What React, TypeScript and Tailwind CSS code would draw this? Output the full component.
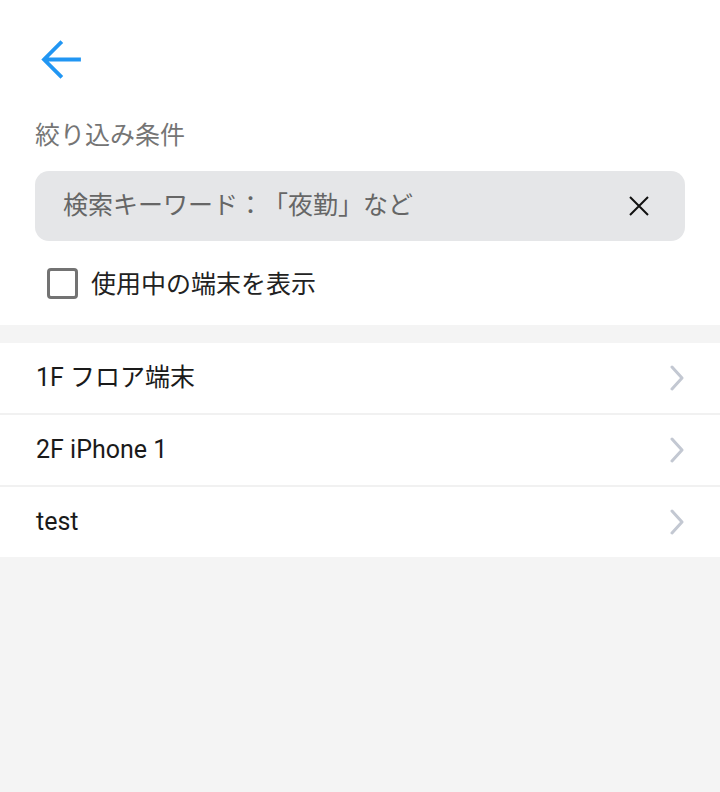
import React from "react";

const font = { fontFamily: "Roboto, 'Noto Sans CJK JP', sans-serif" };

function Chevron() {
  return (
    <svg width="16" height="26" viewBox="0 0 16 26" className="shrink-0">
      <path d="M3 2 L13 13 L3 24" fill="none" stroke="#c3c8d2" strokeWidth="3" strokeLinecap="round" strokeLinejoin="round" />
    </svg>
  );
}

const items = ["1F フロア端末", "2F iPhone 1", "test"];

export default function App() {
  return (
    <div className="min-h-[792px] bg-[#f4f4f4] [text-spacing-trim:space-all]" style={font}>
      <div className="bg-white pb-[25px]">
        <div className="h-[100px] pl-[41px] pt-[40px]">
          <svg width="40" height="40" viewBox="0 0 40 40">
            <path d="M38 19.5 H4 M19.5 3 L3 19.5 L19.5 36" fill="none" stroke="#2196f3" strokeWidth="3.8" strokeLinecap="square" strokeLinejoin="miter" />
          </svg>
        </div>
        <div className="mt-[18px] px-[35px] text-[25px] leading-[36px] text-[#757575]">絞り込み条件</div>
        <div className="mx-[35px] mt-[17px] flex h-[70px] items-center justify-between rounded-[14px] bg-[#e5e6e8] pl-[28px] pr-[36px]">
          <span className="text-[25px] text-[#666666]">検索キーワード：「夜勤」など</span>
          <svg width="20" height="20" viewBox="0 0 20 20">
            <path d="M1 1 L19 19 M19 1 L1 19" stroke="#111" strokeWidth="2" fill="none" />
          </svg>
        </div>
        <div className="mt-[26px] flex items-center pl-[47px]">
          <div className="h-[31px] w-[31px] rounded-[4px] border-[3px] border-[#737373]" />
          <span className="ml-[13px] pt-[2px] text-[25px] leading-[31px] text-[#222222]">使用中の端末を表示</span>
        </div>
      </div>
      <div className="mt-[18px] bg-white">
        {items.map((t, i) => (
          <div
            key={t}
            className={`flex h-[70px] items-center justify-between pl-[36px] pr-[35px] ${i < items.length - 1 ? "border-b-2 border-[#f1f1f1] h-[72px]" : ""}`}
          >
            <span className="text-[25px] text-[#1a1a1a]">{t}</span>
            <Chevron />
          </div>
        ))}
      </div>
    </div>
  );
}
